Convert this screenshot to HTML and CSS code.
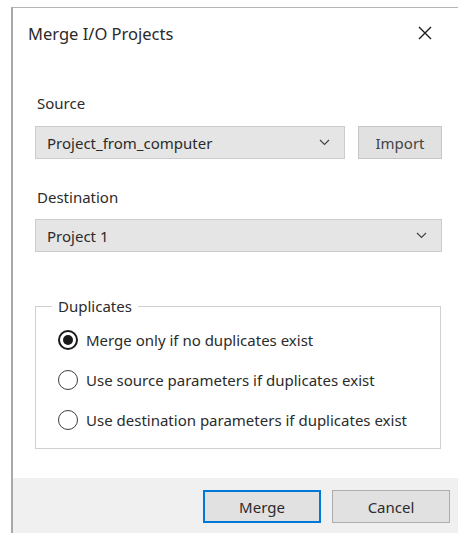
FILE: index.html
```html
<!DOCTYPE html>
<html lang="en">
<head>
<meta charset="utf-8">
<title>Merge I/O Projects</title>
<link rel="stylesheet" href="styles.css">
</head>
<body>
<div class="dialog">
  <div class="titlebar">
    <span class="title">Merge I/O Projects</span>
    <svg class="close" width="14" height="14" viewBox="0 0 14 14" aria-hidden="true">
      <path d="M1 1 L13 13 M13 1 L1 13" stroke="#1a1a1a" stroke-width="1.4" fill="none"/>
    </svg>
  </div>

  <div class="content">
    <div class="label first">Source</div>
    <div class="row">
      <div class="combo grow">
        <span>Project_from_computer</span>
        <svg class="chev" width="11" height="7" viewBox="0 0 11 7" aria-hidden="true"><path d="M1 1 L5.5 5.5 L10 1" stroke="#444" stroke-width="1.2" fill="none"/></svg>
      </div>
      <div class="btn import">Import</div>
    </div>

    <div class="label">Destination</div>
    <div class="combo">
      <span>Project 1</span>
      <svg class="chev" width="11" height="7" viewBox="0 0 11 7" aria-hidden="true"><path d="M1 1 L5.5 5.5 L10 1" stroke="#444" stroke-width="1.2" fill="none"/></svg>
    </div>

    <fieldset class="group">
      <legend>Duplicates</legend>
      <div class="option"><span class="radio checked"></span>Merge only if no duplicates exist</div>
      <div class="option"><span class="radio"></span>Use source parameters if duplicates exist</div>
      <div class="option"><span class="radio"></span>Use destination parameters if duplicates exist</div>
    </fieldset>
  </div>

  <div class="footer">
    <div class="btn action default">Merge</div>
    <div class="btn action">Cancel</div>
  </div>
</div>
</body>
</html>
```

FILE: styles.css
```css
html, body {
  margin: 0;
  padding: 0;
  background: #ffffff;
}

body {
  font-family: "Noto Sans", "Open Sans", sans-serif;
  font-size: 15px;
  color: #2b2b2b;
  overflow: hidden;
}

.dialog {
  margin: 7px 0 0 11px;
  height: 526px;
  border-left: 2px solid #a8a8a8;
  border-top: 1px solid #b4b4b4;
  display: flex;
  flex-direction: column;
  box-sizing: border-box;
}

.titlebar {
  height: 50px;
  padding: 0 26px 0 15px;
  display: flex;
  align-items: center;
  justify-content: space-between;
}

.title {
  font-size: 16.5px;
  color: #2a2a2a;
}

.content {
  padding: 0 16px 0 22px;
}

.label {
  line-height: 20px;
  margin: 28px 0 12px 2px;
}

.label.first {
  margin-top: 35px;
  margin-bottom: 13px;
}

.row {
  display: flex;
  gap: 13px;
}

.grow {
  flex: 1;
}

.combo {
  height: 33px;
  box-sizing: border-box;
  background: #e5e5e5;
  border: 1px solid #cccccc;
  display: flex;
  align-items: center;
  justify-content: space-between;
  padding: 0 14px 0 11px;
}

.btn {
  height: 33px;
  box-sizing: border-box;
  background: #e1e1e1;
  border: 1px solid #c6c6c6;
  display: flex;
  align-items: center;
  justify-content: center;
}

.import {
  width: 84px;
  color: #444;
}

.group {
  margin: 44px 1px 0 0;
  padding: 0 0 8px 16px;
  border: 1px solid #d0d0d0;
}

.group legend {
  padding: 0 6px;
  line-height: 20px;
}

.option {
  height: 40px;
  display: flex;
  align-items: center;
  margin-left: 6px;
}

.option:first-of-type {
  margin-top: 4px;
}

.radio {
  width: 20px;
  height: 20px;
  box-sizing: border-box;
  border: 1px solid #3a3a3a;
  border-radius: 50%;
  margin-right: 8px;
  display: flex;
  align-items: center;
  justify-content: center;
  flex: none;
}

.radio.checked {
  border: 2px solid #1a1a1a;
}

.radio.checked::after {
  content: "";
  width: 10px;
  height: 10px;
  border-radius: 50%;
  background: #1a1a1a;
}

.footer {
  margin-top: auto;
  height: 55px;
  background: #f0f0f0;
  display: flex;
  justify-content: flex-end;
  align-items: flex-start;
  gap: 11px;
  padding: 12px 8px 0 0;
  box-sizing: border-box;
}

.action {
  width: 118px;
  border-color: #adadad;
}

.action.default {
  border: 2px solid #0078d7;
}
```
